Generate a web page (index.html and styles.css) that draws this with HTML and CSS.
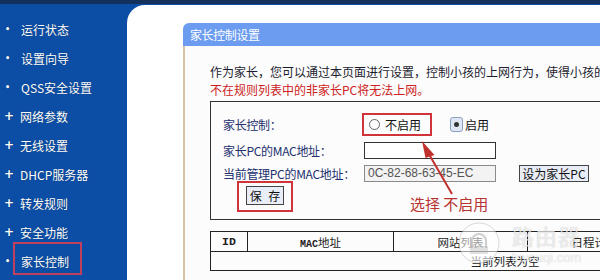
FILE: index.html
```html
<!DOCTYPE html>
<html lang="zh-CN">
<head>
<meta charset="utf-8">
<title>家长控制设置</title>
<link rel="stylesheet" href="styles.css">
</head>
<body>
<div class="topbar"></div>
<div class="main">
  <nav class="sidebar">
    <ul class="menu">
      <li class="item dot">运行状态</li>
      <li class="item dot">设置向导</li>
      <li class="item dot">QSS安全设置</li>
      <li class="item plus">网络参数</li>
      <li class="item plus">无线设置</li>
      <li class="item plus">DHCP服务器</li>
      <li class="item plus">转发规则</li>
      <li class="item plus">安全功能</li>
      <li class="item dot active"><span class="mark">家长控制</span></li>
    </ul>
  </nav>
  <div class="content">
    <section class="panel">
      <div class="panel-title">家长控制设置</div>
      <div class="panel-body">
        <p class="intro">作为家长，您可以通过本页面进行设置，控制小孩的上网行为，使得小孩的PC</p>
        <p class="warn">不在规则列表中的非家长PC将无法上网。</p>
        <div class="form-box">
          <div class="row row-radio">
            <span class="label">家长控制：</span>
            <span class="radio-mark">
              <span class="radio"></span><span class="radio-text">不启用</span>
            </span>
            <span class="radio-checked"><span class="radio-dot"></span></span><span class="radio-text">启用</span>
          </div>
          <div class="row row-input">
            <span class="label">家长PC的MAC地址：</span>
            <span class="input"></span>
          </div>
          <div class="row row-input">
            <span class="label">当前管理PC的MAC地址：</span>
            <span class="input input-disabled">0C-82-68-63-45-EC</span>
            <span class="btn btn-set">设为家长PC</span>
          </div>
          <div class="row row-save">
            <span class="save-mark"><span class="btn btn-save">保 存</span></span>
          </div>
          <svg class="arrow" width="60" height="70" viewBox="0 0 60 70">
            <line x1="45" y1="62" x2="19" y2="17" stroke="#c0322e" stroke-width="2"/>
            <polygon points="15,9 27.5,23 18.5,26" fill="#c0322e"/>
          </svg>
          <span class="note">选择 不启用</span>
        </div>
        <table class="list">
          <thead>
            <tr>
              <th class="c-id">ID</th>
              <th class="c-mac"><b class="mono">MAC</b>地址</th>
              <th class="c-site">网站列表</th>
              <th class="c-plan">日程计划</th>
              <th class="c-state">状态</th>
            </tr>
          </thead>
          <tbody>
            <tr><td colspan="5">当前列表为空</td></tr>
          </tbody>
        </table>
      </div>
    </section>
  </div>
</div>
<div class="watermark">
  <svg class="wm-logo" width="42" height="42" viewBox="0 0 42 42">
    <circle cx="21" cy="21" r="20" fill="rgba(255,255,255,0.55)" stroke="rgba(150,150,150,0.35)" stroke-width="1"/>
    <path d="M14 26 V19 a7 7 0 0 1 14 0 V26" fill="none" stroke="rgba(150,150,150,0.45)" stroke-width="2"/>
    <rect x="12" y="24" width="18" height="8" rx="1" fill="rgba(170,170,170,0.35)"/>
  </svg>
  <span class="wm-text"><span class="wm-big">路由器</span><span class="wm-small">luyouqi.com</span></span>
</div>
</body>
</html>
```
FILE: styles.css
```css
* { box-sizing: border-box; }
html, body { margin: 0; padding: 0; }
body {
  width: 600px;
  height: 280px;
  overflow: hidden;
  background: #0c4ea5;
  font-family: "Liberation Sans", "Noto Sans CJK SC", sans-serif;
  font-size: 12px;
  position: relative;
}
.topbar { height: 4px; background: #14305c; }
.main { display: flex; height: 276px; }
.sidebar { width: 127px; flex: none; }
.menu { list-style: none; margin: 0; padding: 11px 0 0 0; }
.item {
  height: 29px;
  line-height: 29px;
  color: #fff;
  font-family: "Noto Sans CJK SC", sans-serif;
  font-size: 12px;
  display: flex;
  align-items: center;
  text-shadow: 0 0 1px rgba(0,0,0,0.4);
}
.item::before {
  display: inline-block;
  width: 16px;
  padding-left: 4px;
  font-weight: bold;
  font-family: "DejaVu Sans", sans-serif;
}
.item.dot::before { content: "•"; font-size: 8px; padding-left: 5px; }
.item.plus::before { content: "+"; font-size: 12px; }
.item.active { position: relative; }
.mark { position: relative; }
.mark::after {
  content: "";
  position: absolute;
  left: -8px;
  top: -5px;
  width: 65px;
  height: 29px;
  border: 2px solid #c2405e;
}
.content {
  flex: 1;
  margin-top: 1px;
  background: #fff;
  border-top-left-radius: 18px;
  padding: 18px 0 0 56px;
  display: flex;
  flex-direction: column;
}
.panel { flex: 1; display: flex; flex-direction: column; }
.panel-title {
  height: 23px;
  line-height: 23px;
  background: #6b9cef;
  color: #fff;
  padding-left: 7px;
  border-top-left-radius: 6px;
  font-family: "Noto Sans CJK SC", sans-serif;
  font-size: 12px;
  letter-spacing: -0.4px;
}
.panel-body {
  flex: 1;
  border-left: 2px solid #d6c3a6;
  background: #fcfcfc;
  padding: 17px 0 0 25px;
}
.intro, .warn {
  margin: 0;
  line-height: 18px;
  white-space: nowrap;
  font-family: "Noto Sans CJK SC", sans-serif;
  font-size: 12px;
}
.intro { color: #1c1c30; }
.warn { color: #cc2222; }
.form-box {
  position: relative;
  margin-top: 2px;
  width: 420px;
  height: 119px;
  border: 1px solid #333;
  padding: 10px 0 0 12px;
  color: #22306e;
  font-family: "Noto Sans CJK SC", sans-serif;
}
.row { display: flex; align-items: center; }
.label { width: 141px; flex: none; white-space: nowrap; letter-spacing: -0.3px; }
.row-radio { height: 24px; }
.row-input { height: 18px; margin-top: 5px; }
.radio-mark {
  margin-left: -2px;
  height: 23px;
  display: flex;
  align-items: center;
  border: 2px solid #d0343a;
  padding: 0 9px 0 5px;
  color: #111;
}
.radio {
  width: 11px;
  height: 11px;
  border: 1px solid #666;
  border-radius: 50%;
  background: #fff;
  margin-right: 5px;
}
.radio-text { color: #111; }
.radio-checked {
  margin-left: 18px;
  width: 13px;
  height: 15px;
  border-radius: 3px;
  border: 1px solid #8aa0c0;
  background: #dfe7f4;
  display: flex;
  align-items: center;
  justify-content: center;
  margin-right: 2px;
}
.radio-dot { width: 5px; height: 5px; border-radius: 50%; background: #333; }
.input {
  width: 132px;
  height: 17px;
  border: 1px solid #333;
  background: #fff;
  flex: none;
}
.input-disabled {
  background: #f3f3f3;
  border-color: #8a8a8a;
  color: #555;
  font-family: "Liberation Sans", sans-serif;
  font-size: 12px;
  line-height: 15px;
  padding-left: 3px;
}
.btn {
  display: inline-flex;
  align-items: center;
  justify-content: center;
  border: 1px solid #444;
  background: #e9edf8;
  color: #111;
  font-size: 12px;
  flex: none;
}
.btn-set { margin-left: 23px; width: 70px; height: 17px; }
.row-save { margin-top: -1px; }
.save-mark {
  margin-left: 14px;
  border: 2px solid #d0343a;
  padding: 3px 7px 5px 7px;
  display: flex;
}
.btn-save { width: 38px; height: 19px; letter-spacing: 2px; padding-left: 2px; }
.arrow { position: absolute; left: 196px; top: 30px; }
.note {
  position: absolute;
  left: 199px;
  top: 92px;
  color: #b8322f;
  font-size: 15px;
  line-height: 20px;
  white-space: nowrap;
}
.list {
  margin-top: 11px;
  width: 590px;
  border-collapse: collapse;
  table-layout: fixed;
  font-family: "Noto Sans CJK SC", sans-serif;
  font-size: 11.5px;
  color: #222;
}
.list th, .list td {
  border: 1.5px solid #222;
  text-align: center;
  font-weight: normal;
  padding: 0;
}
.list th { height: 20px; }
.list td { height: 19px; border-top-width: 1px; }
.c-id { width: 37px; font-family: "Liberation Mono", monospace; font-weight: bold !important; }
.c-mac { width: 146px; }
.c-site { width: 134px; }
.c-plan { width: 134px; }
.mono { font-family: "Liberation Mono", monospace; font-size: 10px; }
.watermark {
  position: absolute;
  left: 458px;
  top: 222px;
  display: flex;
  align-items: flex-start;
  gap: 12px;
  pointer-events: none;
}
.wm-text { display: flex; flex-direction: column; line-height: 1; padding-top: 2px; }
.wm-big {
  font-family: "Noto Sans CJK SC", sans-serif;
  font-size: 22px;
  color: rgba(255,255,255,0.7);
  text-shadow: 0 0 1px rgba(0,0,0,0.25);
  letter-spacing: 1px;
}
.wm-small {
  margin-top: 5px;
  font-family: "Liberation Sans", sans-serif;
  font-size: 13px;
  color: rgba(255,255,255,0.7);
  text-shadow: 0 0 1px rgba(0,0,0,0.22);
}
```
